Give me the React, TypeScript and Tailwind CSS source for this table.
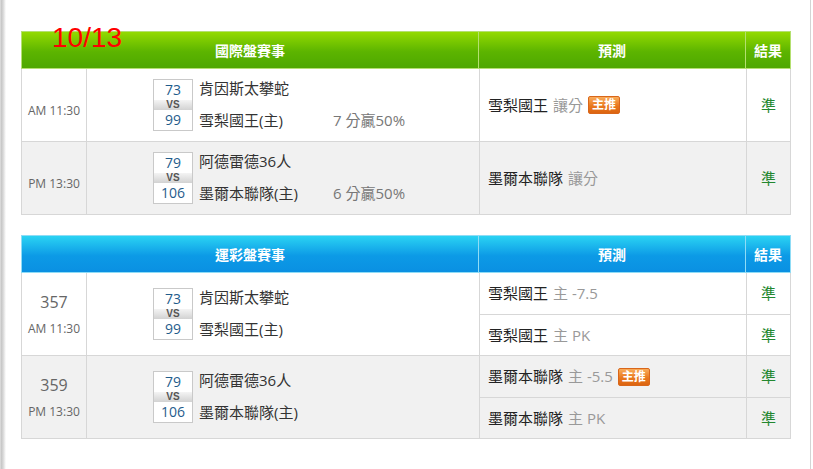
import React from "react";

const FONT = "font-['Open_Sans','Noto_Sans_CJK_TC',sans-serif]";

function Tag() {
  return (
    <span className="ml-[5px] inline-flex h-[18px] items-center rounded-[2px] border border-[#d9661a] bg-[linear-gradient(#f9ac5a,#e9781e_55%,#dc6410)] px-[3px] text-[12px] font-bold leading-none text-white">
      主推
    </span>
  );
}

function ScoreBox({ a, b }: { a: string; b: string }) {
  return (
    <div className="flex w-[40px] flex-col border border-[#c9c9c9] bg-white">
      <div className="h-[20px] text-center text-[14px] leading-[20px] text-[#1f5c8c]">{a}</div>
      <div className="h-[10px] bg-[linear-gradient(#f4f4f4,#d2d2d2)] text-center font-['Liberation_Sans',sans-serif] text-[10px] font-bold leading-[10px] text-[#555]">
        VS
      </div>
      <div className="h-[20px] text-center text-[14px] leading-[20px] text-[#1f5c8c]">{b}</div>
    </div>
  );
}

function Match({
  a,
  b,
  t1,
  t2,
  spread,
}: {
  a: string;
  b: string;
  t1: string;
  t2: string;
  spread?: string;
}) {
  return (
    <div className="flex items-center pl-[66px]">
      <ScoreBox a={a} b={b} />
      <div className="ml-[6px] grid grid-cols-[134px_auto] grid-rows-[21px_10px_24px] text-[15px] text-[#333]">
        <div className="flex items-center leading-none">{t1}</div>
        <div />
        <div />
        <div />
        <div className="flex items-center leading-none">{t2}</div>
        <div className="flex items-center leading-none text-[#777]">{spread}</div>
      </div>
    </div>
  );
}

function Header({ blue }: { blue?: boolean }) {
  const bg = blue
    ? "bg-[linear-gradient(#2bd3f3,#0c9ae6_55%,#0a90e2)] border-[#8fdcf6]"
    : "bg-[linear-gradient(#93da00,#5cb400_55%,#4ea800)] border-[#b4e070]";
  const div = blue ? "border-[#8fdcf6]" : "border-[#b4e070]";
  return (
    <div className={`flex h-[38px] w-[770px] border ${bg} text-[14px] font-bold text-white`}>
      <div className={`flex w-[457px] items-center justify-center border-r ${div}`}>
        {blue ? "運彩盤賽事" : "國際盤賽事"}
      </div>
      <div className={`flex w-[267px] items-center justify-center border-r ${div}`}>預測</div>
      <div className="flex flex-1 items-center justify-center">結果</div>
    </div>
  );
}

function Pred({ team, rest, tag }: { team: string; rest: string; tag?: boolean }) {
  return (
    <div className="flex items-center pl-[8px] text-[15px]">
      <span className="text-[#222]">{team}</span>
      <span className="ml-[5px] text-[#999]">{rest}</span>
      {tag && <Tag />}
    </div>
  );
}

function Result() {
  return <span className="text-[15px] text-[#23872f]">準</span>;
}

const B = "border-[#d7d7d7]";

export default function App() {
  return (
    <div className={`flex h-[469px] w-[813px] bg-white ${FONT}`}>
      <div className="w-[6px] shrink-0 bg-[linear-gradient(to_right,#ececec_0px,#c4c4c4_1px,#d6d6d6_3px,#ffffff_6px)]" />
      <div className="relative flex-1 pl-[15px] pt-[31px]">
        <div className="absolute left-[46px] top-[24px] font-['Liberation_Sans',sans-serif] text-[28px] leading-[28px] text-[#ff0000]">
          10/13
        </div>

        {/* Table 1 */}
        <div className="w-[770px]">
          <Header />
          <div className={`border-l ${B}`}>
            {[
              { time: "AM 11:30", a: "73", b: "99", t1: "肯因斯太攀蛇", t2: "雪梨國王(主)", s: "7 分贏50%", team: "雪梨國王", tag: true, bg: "bg-white" },
              { time: "PM 13:30", a: "79", b: "106", t1: "阿德雷德36人", t2: "墨爾本聯隊(主)", s: "6 分贏50%", team: "墨爾本聯隊", tag: false, bg: "bg-[#f1f1f1]" },
            ].map((r) => (
              <div key={r.time} className={`flex h-[73px] ${r.bg}`}>
                <div className={`flex w-[65px] items-center justify-center border-r border-b ${B} pt-[11px] text-[12px] text-[#666]`}>
                  {r.time}
                </div>
                <div className={`flex w-[393px] items-center border-r border-b ${B}`}>
                  <Match a={r.a} b={r.b} t1={r.t1} t2={r.t2} spread={r.s} />
                </div>
                <div className={`flex w-[267px] items-center border-r border-b ${B}`}>
                  <Pred team={r.team} rest="讓分" tag={r.tag} />
                </div>
                <div className={`flex flex-1 items-center justify-center border-r border-b ${B}`}>
                  <Result />
                </div>
              </div>
            ))}
          </div>
        </div>

        {/* Table 2 */}
        <div className="mt-[20px] w-[770px]">
          <Header blue />
          <div className={`border-l ${B}`}>
            {[
              {
                no: "357", time: "AM 11:30", a: "73", b: "99", t1: "肯因斯太攀蛇", t2: "雪梨國王(主)", bg: "bg-white",
                preds: [
                  { team: "雪梨國王", rest: "主 -7.5", tag: false },
                  { team: "雪梨國王", rest: "主 PK", tag: false },
                ],
              },
              {
                no: "359", time: "PM 13:30", a: "79", b: "106", t1: "阿德雷德36人", t2: "墨爾本聯隊(主)", bg: "bg-[#f1f1f1]",
                preds: [
                  { team: "墨爾本聯隊", rest: "主 -5.5", tag: true },
                  { team: "墨爾本聯隊", rest: "主 PK", tag: false },
                ],
              },
            ].map((r) => (
              <div key={r.no} className={`flex h-[83px] ${r.bg}`}>
                <div className={`flex w-[65px] flex-col items-center justify-center gap-[9px] border-r border-b ${B} text-[#666]`}>
                  <span className="text-[16px] leading-[20px]">{r.no}</span>
                  <span className="text-[12px] leading-[16px]">{r.time}</span>
                </div>
                <div className={`flex w-[393px] items-center border-r border-b ${B}`}>
                  <Match a={r.a} b={r.b} t1={r.t1} t2={r.t2} />
                </div>
                <div className="flex flex-1 flex-col">
                  {r.preds.map((p, i) => (
                    <div key={i} className={`flex ${i === 0 ? "h-[42px]" : "h-[41px]"}`}>
                      <div className={`flex w-[267px] items-center border-r border-b ${B}`}>
                        <Pred team={p.team} rest={p.rest} tag={p.tag} />
                      </div>
                      <div className={`flex flex-1 items-center justify-center border-r border-b ${B}`}>
                        <Result />
                      </div>
                    </div>
                  ))}
                </div>
              </div>
            ))}
          </div>
        </div>
      </div>
      <div className="w-[1px] shrink-0 bg-[#d4d4d4]" />
      <div className="w-[2px] shrink-0" />
    </div>
  );
}
